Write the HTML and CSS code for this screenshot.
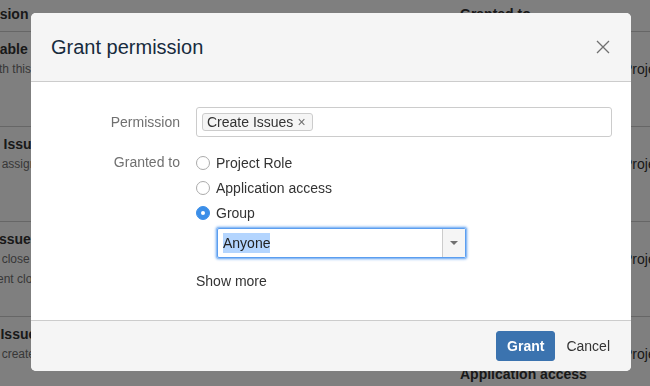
FILE: index.html
```html
<!DOCTYPE html>
<html lang="en">

<head>
  <meta charset="UTF-8">
  <meta name="viewport" content="width=device-width, initial-scale=1.0">
  <title>Grant permission</title>
  <link rel="stylesheet" href="styles.css">
</head>

<body>
  <!-- permission scheme table behind the dialog -->
  <div class="scheme">
    <div class="scheme-row scheme-head">
      <div>Permission</div>
      <div>Granted to</div>
      <div></div>
    </div>
    <div class="scheme-row">
      <div>
        <div class="perm-name">Assignable User</div>
        <div class="perm-desc">Users with this permission may be assigned to issues.</div>
      </div>
      <div>
        <div class="grant-type">Project Role</div>
      </div>
      <div>
        <div class="blank-line"></div>
        <div>Project Role</div>
      </div>
    </div>
    <div class="scheme-row">
      <div>
        <div class="perm-name">Assign Issues</div>
        <div class="perm-desc">Ability to assign issues to other people.</div>
      </div>
      <div>
        <div class="grant-type">Project Role</div>
      </div>
      <div>
        <div class="blank-line"></div>
        <div>Project Role</div>
      </div>
    </div>
    <div class="scheme-row">
      <div>
        <div class="perm-name">Close Issues</div>
        <div class="perm-desc">Ability to close issues. Often useful where your developers resolve issues, and a QA<br>department closes them.</div>
      </div>
      <div>
        <div class="grant-type">Project Role</div>
      </div>
      <div>
        <div class="blank-line"></div>
        <div>Project Role</div>
      </div>
    </div>
    <div class="scheme-row">
      <div>
        <div class="perm-name">Create Issues</div>
        <div class="perm-desc">Ability to create issues.</div>
      </div>
      <div>
        <div class="grant-type">Project Role</div>
        <div>Administrators</div>
        <div class="grant-type">Application access</div>
      </div>
      <div>
        <div class="blank-line"></div>
        <div>Project Role</div>
      </div>
    </div>
  </div>

  <div class="blanket"></div>

  <!-- grant permission dialog -->
  <section class="dialog">
    <header class="dialog-header">
      <h2>Grant permission</h2>
      <button class="dialog-close" aria-label="Close">
        <svg width="14" height="14" viewBox="0 0 14 14">
          <path d="M1 1 L13 13 M13 1 L1 13" stroke="#707070" stroke-width="1.3" fill="none" />
        </svg>
      </button>
    </header>

    <div class="dialog-body">
      <div class="field-group">
        <label class="field-label">Permission</label>
        <div class="multi-select">
          <span class="tag">Create Issues <span class="tag-remove">&times;</span></span>
        </div>
      </div>

      <div class="field-group granted">
        <label class="field-label">Granted to</label>
        <div class="choices">
          <div class="radio-row"><span class="radio"></span>Project Role</div>
          <div class="radio-row"><span class="radio"></span>Application access</div>
          <div class="radio-row"><span class="radio checked"></span>Group</div>
          <div class="single-select">
            <span class="select-value"><span class="selected-text">Anyone</span></span>
            <span class="select-drop"><span class="arrow"></span></span>
          </div>
          <div class="show-more">Show more</div>
        </div>
      </div>
    </div>

    <footer class="dialog-footer">
      <button class="btn-primary">Grant</button>
      <button class="btn-link">Cancel</button>
    </footer>
  </section>
</body>

</html>
```

FILE: styles.css
```css
* {
  margin: 0;
  padding: 0;
  box-sizing: border-box;
}

body {
  font-family: 'Liberation Sans', Arial, sans-serif;
  font-size: 14px;
  line-height: 20px;
  color: #333;
  background-color: #fff;
  overflow: hidden;
  height: 386px;
}

/* 背景表格 */
.scheme {
  margin-left: -47px;
  width: 760px;
}

.scheme-row {
  display: grid;
  grid-template-columns: 507px 163px 1fr;
  height: 95px;
  padding-top: 7px;
  border-bottom: 1px solid #ccc;
}

.scheme-head {
  height: 32px;
  padding-top: 4px;
  font-weight: bold;
}

.perm-name,
.grant-type {
  font-weight: bold;
}

.perm-desc {
  font-size: 12px;
  color: #707070;
}

.blank-line {
  height: 20px;
}

.blanket {
  position: fixed;
  top: 0;
  left: 0;
  width: 100%;
  height: 100%;
  background-color: rgba(0, 0, 0, 0.5);
}

/* 對話框 */
.dialog {
  position: absolute;
  top: 13px;
  left: 31px;
  width: 600px;
  height: 358px;
  display: flex;
  flex-direction: column;
  background-color: #fff;
  border-radius: 5px;
  overflow: hidden;
}

.dialog-header {
  height: 69px;
  display: flex;
  align-items: center;
  justify-content: space-between;
  padding: 0 20px;
  background-color: #f5f5f5;
  border-bottom: 1px solid #ccc;
}

.dialog-header h2 {
  font-size: 20px;
  font-weight: normal;
  color: #172b3d;
  line-height: 24px;
}

.dialog-close {
  border: none;
  background: none;
  width: 14px;
  height: 14px;
  margin-right: 1px;
  display: flex;
}

.dialog-body {
  flex: 1;
  padding: 25px 19px 0 20px;
}

.field-group {
  display: grid;
  grid-template-columns: 129px 1fr;
  column-gap: 16px;
}

.field-label {
  text-align: right;
  color: #707070;
  line-height: 30px;
}

.multi-select {
  height: 30px;
  border: 1px solid #ccc;
  border-radius: 3px;
  padding: 5px 5px;
  display: flex;
  align-items: center;
}

.tag {
  display: inline-flex;
  align-items: center;
  height: 18px;
  padding: 0 6px 0 4px;
  border: 1px solid #ccc;
  border-radius: 3px;
  background-color: #f5f5f5;
  line-height: 16px;
  color: #333;
}

.tag-remove {
  margin-left: 4px;
  color: #707070;
  font-size: 14px;
}

.granted {
  margin-top: 13px;
}

.granted .field-label {
  line-height: 25px;
}

.radio-row {
  height: 25px;
  display: flex;
  align-items: center;
}

.radio {
  width: 14px;
  height: 14px;
  margin-right: 6px;
  border: 1px solid #aaa;
  border-radius: 50%;
  background-color: #fff;
  position: relative;
}

.radio.checked {
  border-color: #3b8ee8;
  background-color: #3b8ee8;
}

.radio.checked::after {
  content: '';
  position: absolute;
  top: 4px;
  left: 4px;
  width: 4px;
  height: 4px;
  border-radius: 50%;
  background-color: #fff;
}

.single-select {
  margin: 3px 0 0 21px;
  width: 249px;
  height: 30px;
  display: flex;
  border: 1px solid #5b9ef0;
  border-radius: 2px;
  box-shadow: 0 0 0 1px #8fbdf5, 0 0 2px 2px rgba(91, 158, 240, 0.45);
}

.select-value {
  flex: 1;
  padding-left: 5px;
  display: flex;
  align-items: center;
}

.selected-text {
  background-color: #b4d5fe;
  color: #222;
}

.select-drop {
  width: 23px;
  border-left: 1px solid #ccc;
  background-color: #f5f5f5;
  display: flex;
  align-items: center;
  justify-content: center;
}

.arrow {
  border-left: 4px solid transparent;
  border-right: 4px solid transparent;
  border-top: 4px solid #707070;
}

.show-more {
  margin-top: 13px;
  line-height: 20px;
  color: #333;
}

/* 底部按鈕 */
.dialog-footer {
  height: 51px;
  display: flex;
  justify-content: flex-end;
  align-items: flex-start;
  padding: 10px 21px 0 0;
  background-color: #f5f5f5;
  border-top: 1px solid #ccc;
}

button {
  font-family: inherit;
  font-size: 14px;
  cursor: pointer;
}

.btn-primary {
  height: 30px;
  padding: 0 10px;
  border: 1px solid #3b73af;
  border-radius: 3px;
  background-color: #3b73af;
  color: #fff;
  font-weight: bold;
}

.btn-link {
  height: 30px;
  margin-left: 11px;
  border: none;
  background: none;
  color: #333;
}
```
